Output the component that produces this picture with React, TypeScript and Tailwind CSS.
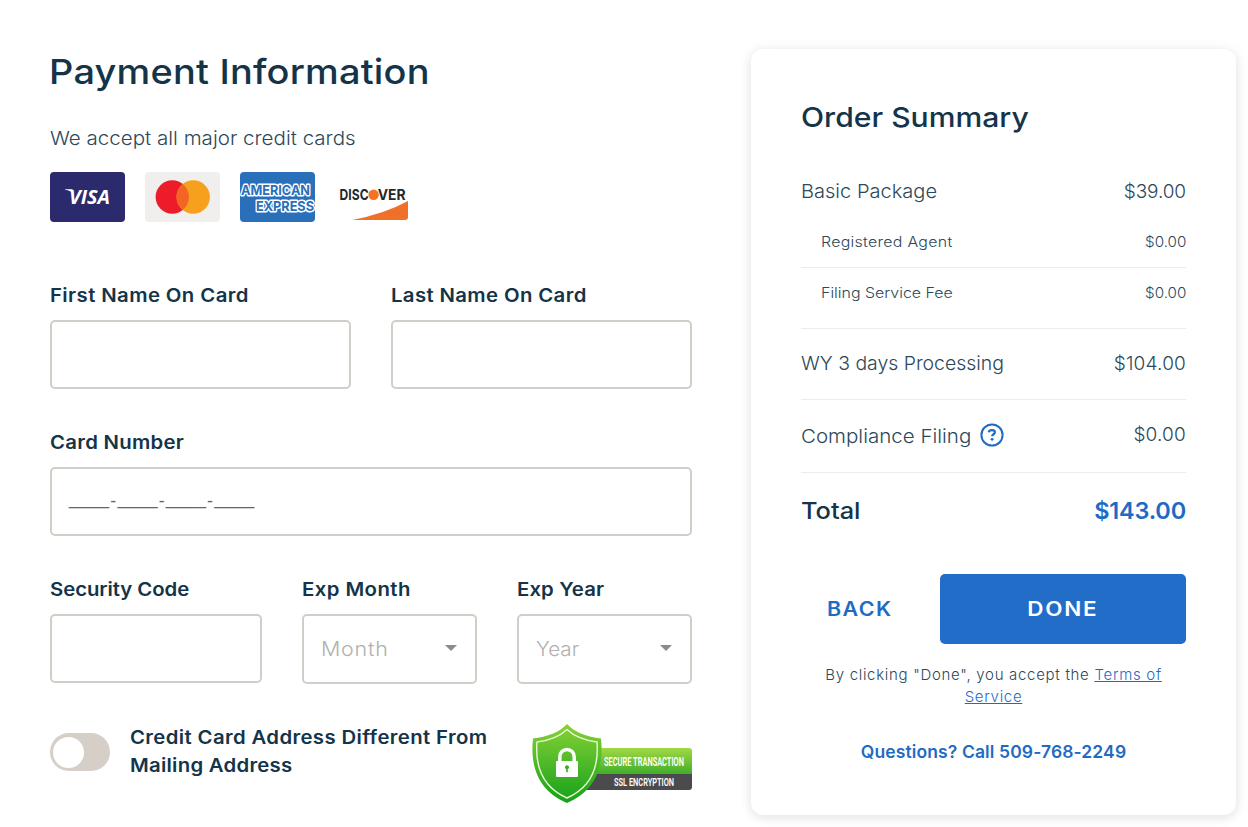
import React from "react";

function Visa() {
  return (
    <svg width="75" height="50" viewBox="0 0 75 50" aria-label="Visa">
      <rect width="75" height="50" rx="4" fill="#2b2a6c" />
      <text x="19" y="31.9" textLength="41" lengthAdjust="spacingAndGlyphs" fontFamily="Open Sans, sans-serif" fontWeight="700" fontStyle="italic" fontSize="20.4" fill="#fff">VISA</text>
      <path d="M15 17.2h7.5l1.2 4.6q-3-3.2-8.7-4z" fill="#fff" />
    </svg>
  );
}

function Mastercard() {
  return (
    <svg width="75" height="50" viewBox="0 0 75 50" aria-label="Mastercard">
      <rect width="75" height="50" rx="4" fill="#f0efed" />
      <circle cx="27.3" cy="25" r="16.7" fill="#ec1c2b" />
      <circle cx="48.2" cy="25" r="16.7" fill="#f6a01e" />
      <path d="M37.75 12a16.7 16.7 0 0 1 0 26a16.7 16.7 0 0 1 0-26z" fill="#f26522" />
    </svg>
  );
}

function Amex() {
  return (
    <svg width="75" height="50" viewBox="0 0 75 50" aria-label="American Express">
      <rect width="75" height="50" rx="4" fill="#2a6fb9" />
      <g fontFamily="Inter, sans-serif" fontWeight="700" fontSize="13.5" fill="#2a6fb9" stroke="#fff" strokeWidth="2.8" paintOrder="stroke" strokeLinejoin="round">
        <text x="1" y="22.8" textLength="69" lengthAdjust="spacingAndGlyphs">AMERICAN</text>
        <text x="16" y="39.2" textLength="58" lengthAdjust="spacingAndGlyphs">EXPRESS</text>
      </g>
    </svg>
  );
}

function Discover() {
  return (
    <svg width="75" height="50" viewBox="0 0 75 50" aria-label="Discover">
      <g fontFamily="Inter, sans-serif" fontWeight="700" fontSize="15" fill="#26272b">
        <text x="4.6" y="28.2" textLength="29" lengthAdjust="spacingAndGlyphs">DISC</text>
        <text x="42.8" y="28.2" textLength="27.8" lengthAdjust="spacingAndGlyphs">VER</text>
      </g>
      <circle cx="38.6" cy="22.8" r="5.2" fill="#f37321" />
      <path d="M17 48Q49 42 73 29v16q0 3-3 3z" fill="#f0702a" />
    </svg>
  );
}

function SecureBadge() {
  return (
    <svg width="160" height="80" viewBox="0 0 160 80" aria-label="Secure transaction, SSL encryption">
      <defs>
        <linearGradient id="shield" x1="0" y1="0" x2="0" y2="1">
          <stop offset="0" stopColor="#86d235" />
          <stop offset="1" stopColor="#15a01a" />
        </linearGradient>
        <linearGradient id="band" x1="0" y1="0" x2="0" y2="1">
          <stop offset="0" stopColor="#a3d943" />
          <stop offset="1" stopColor="#3fae2b" />
        </linearGradient>
      </defs>
      <path d="M50 24h107q3 0 3 3v23H50z" fill="url(#band)" />
      <path d="M50 50h110v13q0 3-3 3H50z" fill="#4b4b4d" />
      <path d="M35 0C42 8 55 13 69 14.5C72 42 64 67 35 79C6 67-2 42 1 14.5C15 13 28 8 35 0z" fill="url(#shield)" />
      <path d="M35 5.5C42 12 53 16.5 65 18C67 43 60 63 35 74C10 63 3 43 5 18C17 16.5 28 12 35 5.5z" fill="none" stroke="#eaf8d5" strokeWidth="1.4" />
      <path d="M27.8 38v-5.3a7.2 7.2 0 0 1 14.4 0V38" fill="none" stroke="#fff" strokeWidth="3.5" />
      <rect x="24" y="37" width="22" height="16" rx="1" fill="#fff" />
      <circle cx="35" cy="43.3" r="2" fill="#36ae25" />
      <path d="M34.2 43h1.6v5.3h-1.6z" fill="#36ae25" />
      <g fontFamily="Roboto, sans-serif" fontWeight="600" fill="#fff">
        <text x="72" y="41.5" fontSize="12" textLength="80" lengthAdjust="spacingAndGlyphs">SECURE TRANSACTION</text>
        <text x="82" y="62" fontSize="11.5" textLength="60" lengthAdjust="spacingAndGlyphs">SSL ENCRYPTION</text>
      </g>
    </svg>
  );
}

function HelpIcon() {
  return (
    <svg width="24" height="24" viewBox="0 0 24 24" fill="none" stroke="#1f6bc4" aria-label="Help">
      <circle cx="12" cy="12" r="10.6" strokeWidth="2" />
      <path d="M8.7 9.2C9 7.7 10.3 7.1 11.9 7.1c1.8 0 3 .8 3 2.2 0 1.9-2.8 2-2.8 4" strokeWidth="2.2" />
      <circle cx="12.1" cy="16.3" r="1.4" fill="#1f6bc4" stroke="none" />
    </svg>
  );
}

function Field({ label, labelClass, className, children }: { label: string; labelClass: string; className: string; children?: React.ReactNode }) {
  return (
    <div className={`flex flex-col gap-[11px] ${className}`}>
      <div className={`h-[27px] w-fit origin-left scale-x-[1.1] text-[18.5px] leading-[27px] font-semibold whitespace-nowrap ${labelClass}`}>{label}</div>
      {children ?? <Box />}
    </div>
  );
}

function Box({ children }: { children?: React.ReactNode }) {
  return <div className="flex h-[69px] items-center rounded-[5px] border-2 border-[#d2cec7] bg-white px-[17px]">{children}</div>;
}

function Select({ text, textClass }: { text: string; textClass: string }) {
  return (
    <div className="flex h-[70px] items-center justify-between rounded-[5px] border-2 border-[#d2cec7] pr-[18px] pl-[17px]">
      <span className={`origin-left pt-0.5 text-[19.5px] font-light text-[#b0b0b0] ${textClass}`}>{text}</span>
      <svg width="12" height="6" viewBox="0 0 12 6" className="mb-0.5"><path d="M0 0h12L6 6z" fill="#8b8b8b" /></svg>
    </div>
  );
}

export default function App() {
  return (
    <main className="flex h-[827px] w-[1248px] overflow-hidden bg-white pl-[50px] font-['Inter',sans-serif] text-[#14344a]">
      <section className="w-[642px] shrink-0 pt-12">
        <h1 className="-ml-px h-12 w-fit origin-left scale-x-[1.1] text-[34.5px] leading-[48px] font-medium tracking-[0.18px] whitespace-nowrap">Payment Information</h1>
        <p className="mt-7 h-7 w-fit origin-left scale-x-[1.082] text-[19px] leading-[30px] font-light text-[#2c485a]">We accept all major credit cards</p>
        <div className="mt-5 flex gap-5">
          <Visa />
          <Mastercard />
          <Amex />
          <Discover />
        </div>
        <div className="mt-[60px] flex gap-10">
          <Field label="First Name On Card" labelClass="tracking-[0.36px]" className="w-[301px]" />
          <Field label="Last Name On Card" labelClass="tracking-[0.33px]" className="w-[301px]" />
        </div>
        <Field label="Card Number" labelClass="tracking-[0.25px]" className="mt-10">
          <Box>
            <div className="flex font-['Liberation_Sans',sans-serif] text-[18px] leading-6 text-[#666]">
              {[0, 1, 2, 3].map((group) => (
                <React.Fragment key={group}>
                  {group > 0 && <span className="-mt-px px-[1.2px]">-</span>}
                  <span className="-mt-1">____</span>
                </React.Fragment>
              ))}
            </div>
          </Box>
        </Field>
        <div className="mt-10 flex h-[108px] gap-10">
          <Field label="Security Code" labelClass="tracking-[-0.06px]" className="w-[212px]" />
          <Field label="Exp Month" labelClass="tracking-[0.38px]" className="w-[175px]">
            <Select text="Month" textClass="scale-x-[1.1] tracking-[0.7px]" />
          </Field>
          <Field label="Exp Year" labelClass="tracking-[0.1px]" className="w-[175px]">
            <Select text="Year" textClass="scale-x-[1.06]" />
          </Field>
        </div>
        <div className="mt-10 flex h-20 items-start">
          <div className="mt-[9px] flex h-[38px] w-[60px] items-center rounded-full bg-[#d5cfc7] pl-[3px]">
            <div className="size-[31px] rounded-full bg-white" />
          </div>
          <div className="-mt-px ml-5 w-[382px] text-[18.5px] leading-7 font-semibold whitespace-nowrap">
            <div className="w-fit origin-left scale-x-[1.1] tracking-[0.33px]">Credit Card Address Different From</div>
            <div className="w-fit origin-left scale-x-[1.1] tracking-[0.23px]">Mailing Address</div>
          </div>
          <div className="ml-5"><SecureBadge /></div>
        </div>
      </section>

      <aside className="mt-[49px] ml-[59px] h-[766px] w-[485px] shrink-0 rounded-[12px] bg-white px-[50px] shadow-[0_2px_12px_rgba(0,0,0,0.13)]">
        <h2 className="mt-[48px] h-10 w-fit origin-left scale-x-[1.095] text-[27.5px] leading-10 font-medium">Order Summary</h2>
        <div className="text-[#2c485a]">
          <div className="mt-[34px] flex h-10 items-center justify-between pt-0.5 text-[19px] font-light">
            <span className="origin-left scale-x-[1.055]">Basic Package</span>
            <span className="tracking-[-0.1px]">$39.00</span>
          </div>
          <div className="flex h-[57px] items-center justify-between border-b border-[#ececec] pt-[5px] pl-5 text-[14.5px] font-light">
            <span className="origin-left scale-x-[1.1] tracking-[0.25px]">Registered Agent</span>
            <span className="origin-right scale-x-[1.05]">$0.00</span>
          </div>
          <div className="flex h-[61px] items-center justify-between border-b border-[#ececec] pb-[11px] pl-5 text-[14.5px] font-light">
            <span className="origin-left scale-x-[1.1]">Filing Service Fee</span>
            <span className="origin-right scale-x-[1.05]">$0.00</span>
          </div>
          <div className="flex h-[71px] items-center justify-between border-b border-[#ececec] pt-px text-[19px] font-light">
            <span className="origin-left scale-x-[1.022]">WY 3 days Processing</span>
            <span className="tracking-[0.2px]">$104.00</span>
          </div>
          <div className="flex h-[73px] items-center justify-between border-b border-[#ececec] pb-[3px] text-[19px] font-light">
            <div className="flex items-center">
              <span className="w-[178.5px] pt-[5px]"><span className="inline-block origin-left scale-x-[1.08]">Compliance Filing</span></span>
              <HelpIcon />
            </div>
            <span className="pt-0.5 tracking-[0.2px]">$0.00</span>
          </div>
        </div>
        <div className="flex h-[76px] items-center justify-between text-[23.5px]">
          <span className="origin-left scale-x-[1.08] font-medium">Total</span>
          <span className="font-semibold tracking-[-0.19px] text-[#1f6bc4]">$143.00</span>
        </div>
        <div className="mt-[25px] flex h-[70px] text-[19.5px] font-semibold">
          <button className="w-[139px] pt-0.5 pr-[21px] text-[#1f6bc4]"><span className="inline-block scale-x-[1.1] tracking-[1.3px]">BACK</span></button>
          <button className="w-[246px] rounded-[5px] bg-[#216dc8] pt-0.5 text-white"><span className="inline-block scale-x-[1.15] tracking-[1.5px]">DONE</span></button>
        </div>
        <div className="mt-5 text-center text-[15px] leading-[22px] font-light tracking-[0.7px] text-[#2c485a]">
          By clicking "Done", you accept the <a className="text-[#1f6bc4] underline">Terms of<br />Service</a>
        </div>
        <div className="mt-[31px] text-center text-[17.5px] leading-[26px] font-semibold tracking-[0.12px] text-[#1f6bc4]">Questions? Call 509-768-2249</div>
      </aside>
    </main>
  );
}
